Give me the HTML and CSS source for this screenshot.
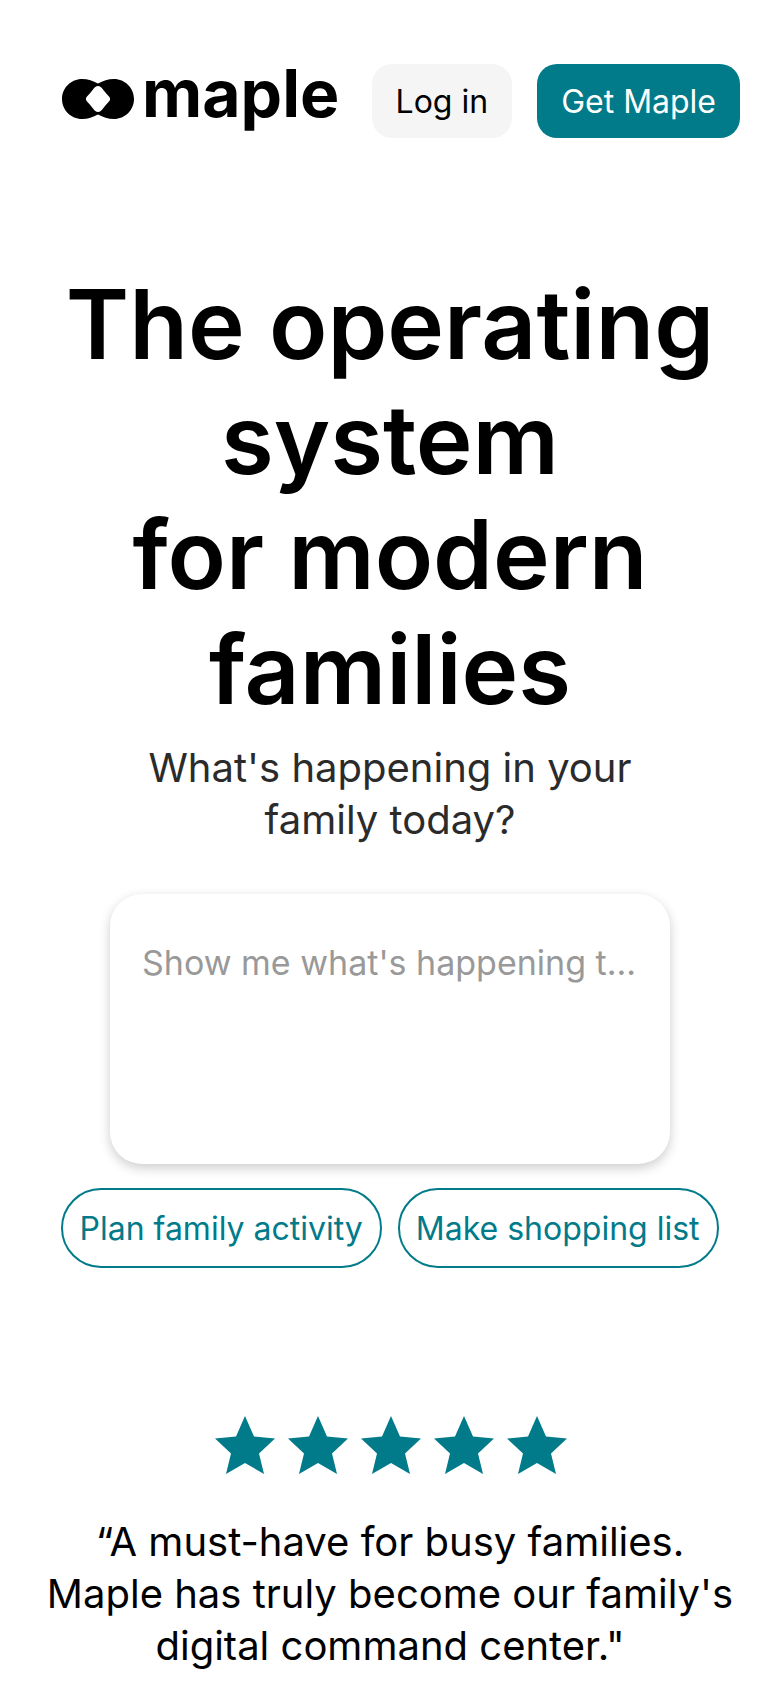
FILE: index.html
```html
<!DOCTYPE html>
<html lang="en">
<head>
    <meta charset="UTF-8">
    <meta name="viewport" content="width=device-width, initial-scale=1.0">
    <title>Maple</title>
    <link rel="stylesheet" href="styles.css">
</head>
<body>

<header class="topbar">
    <a class="logo" href="#">
        <svg class="logo-mark" viewBox="0 0 72 40" width="72" height="40">
            <path fill-rule="evenodd" d="M20 0C26 0 31 2 36 4.500C41 2 46 0 52 0C63 0 72 9 72 20C72 31 63 40 52 40C46 40 41 38 36 35.500C31 38 26 40 20 40C9 40 0 31 0 20C0 9 9 0 20 0ZM36 7C38 7 39.500 8.500 41 10.500C43 13 45 15.500 47 17.500C48.500 19 48.500 21 47 22.500C45 24.500 43 27 41 29.500C39.500 31.500 38 33 36 33C34 33 32.500 31.500 31 29.500C29 27 27 24.500 25 22.500C23.500 21 23.500 19 25 17.500C27 15.500 29 13 31 10.500C32.500 8.500 34 7 36 7Z"/>
        </svg>
        <span class="logo-text">maple</span>
    </a>
    <nav class="topbar-actions">
        <a class="btn btn-light" href="#">Log in</a>
        <a class="btn btn-teal" href="#">Get Maple</a>
    </nav>
</header>

<main>
    <section class="hero">
        <h1>The operating system<br>for modern families</h1>
        <p class="subtitle">What's happening in your family today?</p>

        <div class="prompt-card">
            <p class="prompt-text">Show me what's happening t...</p>
        </div>

        <div class="chips">
            <a class="chip" href="#">Plan family activity</a>
            <a class="chip" href="#">Make shopping list</a>
        </div>
    </section>

    <section class="review">
        <div class="stars">
            <svg viewBox="0 0 60 58" width="60" height="58"><path d="M30 0L39 20.500L60 22.500L44 37.500L49 58L30 47L11 58L16 37.500L0 22.500L21 20.500Z"/></svg>
            <svg viewBox="0 0 60 58" width="60" height="58"><path d="M30 0L39 20.500L60 22.500L44 37.500L49 58L30 47L11 58L16 37.500L0 22.500L21 20.500Z"/></svg>
            <svg viewBox="0 0 60 58" width="60" height="58"><path d="M30 0L39 20.500L60 22.500L44 37.500L49 58L30 47L11 58L16 37.500L0 22.500L21 20.500Z"/></svg>
            <svg viewBox="0 0 60 58" width="60" height="58"><path d="M30 0L39 20.500L60 22.500L44 37.500L49 58L30 47L11 58L16 37.500L0 22.500L21 20.500Z"/></svg>
            <svg viewBox="0 0 60 58" width="60" height="58"><path d="M30 0L39 20.500L60 22.500L44 37.500L49 58L30 47L11 58L16 37.500L0 22.500L21 20.500Z"/></svg>
        </div>
        <p class="quote">“A must-have for busy families. Maple has truly become our family's digital command center."</p>
    </section>
</main>

</body>
</html>
```

FILE: styles.css
```css
body {
    margin: 0;
    height: 1688px;
    overflow: hidden;
    background-color: #fff;
    color: #000;
    font-family: Inter, "Liberation Sans", sans-serif;
}
a {
    text-decoration: none;
}
.topbar {
    display: flex;
    align-items: center;
    justify-content: space-between;
    padding: 64px 40px 0 62px;
}
.logo {
    display: flex;
    align-items: center;
    gap: 8px;
    color: #000;
}
.logo-mark {
    margin-bottom: 4px;
}
.logo-text {
    padding-bottom: 16px;
    font-weight: 700;
    font-size: 66px;
    line-height: 58px;
}
.topbar-actions {
    display: flex;
    gap: 25px;
}
.btn {
    display: flex;
    align-items: center;
    height: 74px;
    padding: 0 24px;
    border-radius: 20px;
    font-size: 32px;
}
.btn-light {
    background-color: #f5f5f5;
    color: #000;
}
.btn-teal {
    background-color: #017a8a;
    color: #fff;
}
.hero {
    display: flex;
    flex-direction: column;
    align-items: center;
    text-align: center;
    padding-top: 129px;
}
h1 {
    margin: 0;
    width: 700px;
    font-size: 96px;
    font-weight: 600;
    line-height: 115px;
}
.subtitle {
    margin: 15px 0 0;
    width: 520px;
    font-size: 40px;
    line-height: 52px;
    color: #2b2b2b;
}
.prompt-card {
    box-sizing: border-box;
    width: 560px;
    height: 270px;
    margin-top: 48px;
    padding: 43px 32px 32px;
    background-color: #fff;
    border-radius: 32px;
    box-shadow: 0 4px 12px rgba(0, 0, 0, 0.2);
    text-align: left;
}
.prompt-text {
    margin: 0;
    font-size: 34px;
    line-height: 52px;
    color: #999;
    white-space: nowrap;
}
.chips {
    display: flex;
    justify-content: center;
    gap: 16px;
    margin-top: 24px;
}
.chip {
    display: flex;
    align-items: center;
    height: 76px;
    padding: 0 17px 0 16px;
    border: 2px solid #017a8a;
    border-radius: 40px;
    color: #017a8a;
    font-size: 32px;
}
.review {
    padding-top: 148px;
    text-align: center;
}
.stars {
    display: flex;
    justify-content: center;
    gap: 13px;
    padding-left: 2px;
}
.stars svg {
    fill: #017a8a;
}
.quote {
    margin: 42px auto 0;
    width: 700px;
    font-size: 40px;
    line-height: 52px;
}
```
